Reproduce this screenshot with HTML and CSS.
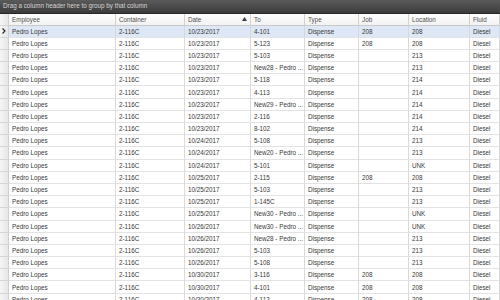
FILE: index.html
```html
<html>
<head>
	<title>Fuel Transactions</title>
	<link rel="stylesheet" href="styles.css">
</head>
<body>
	<div class="group-panel">Drag a column header here to group by that column</div>
	<div class="grid">
		<div class="row header">
			<div class="ind"></div>
			<div class="cell">Employee</div>
			<div class="cell">Container</div>
			<div class="cell sorted">Date <svg class="sort" width="5" height="4" viewBox="0 0 5 4"><path d="M2.5 0 L5 4 L0 4 Z" fill="#3a3a3a"/></svg></div>
			<div class="cell">To</div>
			<div class="cell">Type</div>
			<div class="cell">Job</div>
			<div class="cell">Location</div>
			<div class="cell">Fluid</div>
		</div>
	</div>

	<script type="text/javascript">
	var rows = [
		["10/23/2017", "4-101", "208", "208"],
		["10/23/2017", "5-123", "208", "208"],
		["10/23/2017", "5-103", "", "213"],
		["10/23/2017", "New28 - Pedro ...", "", "213"],
		["10/23/2017", "5-118", "", "214"],
		["10/23/2017", "4-113", "", "214"],
		["10/23/2017", "New29 - Pedro ...", "", "214"],
		["10/23/2017", "2-116", "", "214"],
		["10/23/2017", "8-102", "", "214"],
		["10/24/2017", "5-108", "", "213"],
		["10/24/2017", "New20 - Pedro ...", "", "213"],
		["10/24/2017", "5-101", "", "UNK"],
		["10/25/2017", "2-115", "208", "208"],
		["10/25/2017", "5-103", "", "213"],
		["10/25/2017", "1-145C", "", "213"],
		["10/25/2017", "New30 - Pedro ...", "", "UNK"],
		["10/26/2017", "New30 - Pedro ...", "", "UNK"],
		["10/26/2017", "New28 - Pedro ...", "", "213"],
		["10/26/2017", "5-103", "", "213"],
		["10/26/2017", "5-108", "", "213"],
		["10/30/2017", "3-116", "208", "208"],
		["10/30/2017", "4-101", "208", "208"],
		["10/30/2017", "4-112", "208", "208"]
	];

	var grid = document.querySelector(".grid");
	rows.forEach(function (r, i) {
		var values = ["Pedro Lopes", "2-116C", r[0], r[1], "Dispense", r[2], r[3], "Diesel"];
		var row = document.createElement("div");
		row.className = i == 0 ? "row selected" : "row";
		var ind = document.createElement("div");
		ind.className = "ind";
		if (i == 0) {
			ind.innerHTML = '<svg width="4" height="6" viewBox="0 0 4 6"><path d="M0.5 0.5 L3 3 L0.5 5.5" fill="none" stroke="#222" stroke-width="1.1"/></svg>';
		}
		row.appendChild(ind);
		values.forEach(function (v) {
			var cell = document.createElement("div");
			cell.className = "cell";
			cell.textContent = v;
			row.appendChild(cell);
		});
		grid.appendChild(row);
	});
	</script>
</body>
</html>
```

FILE: styles.css
```css
body{
	margin: 0;
	font-family: "Liberation Sans", Arial, sans-serif;
	font-size: 6.3px;
	color: #383838;
	background-color: #fff;
	overflow: hidden;
}

.group-panel{
	height: 13px;
	padding-left: 3px;
	line-height: 12px;
	color: #d4d4d4;
	background: linear-gradient(#5a5a5a, #3c3c3c);
	border-bottom: 1px solid #262626;
}

.row{
	display: grid;
	grid-template-columns: 9px 107px 69px 66px 54px 54px 50px 61px 30px;
	height: 12.2px;
}

.cell{
	box-sizing: border-box;
	padding-left: 3px;
	border-right: 1px solid #dadada;
	border-bottom: 1px solid #e3e3e3;
	display: flex;
	align-items: center;
	white-space: nowrap;
	overflow: hidden;
}

.ind{
	box-sizing: border-box;
	border-right: 1px solid #cfcfcf;
	border-bottom: 1px solid #d6d6d6;
	background: linear-gradient(90deg, #f6f6f6, #e6e6e6);
	display: flex;
	align-items: center;
	justify-content: center;
}

.header{
	height: 11.5px;
	background: linear-gradient(#ffffff, #f1f1f1);
	color: #505050;
}

.header .cell{
	border-right: 1px solid #d2d2d2;
	border-bottom: 1px solid #c9c9c9;
}

.sorted{
	justify-content: space-between;
	padding-right: 3px;
}

.selected .cell{
	background-color: #dde7f5;
	border-right-color: #cfd9e8;
}
```
